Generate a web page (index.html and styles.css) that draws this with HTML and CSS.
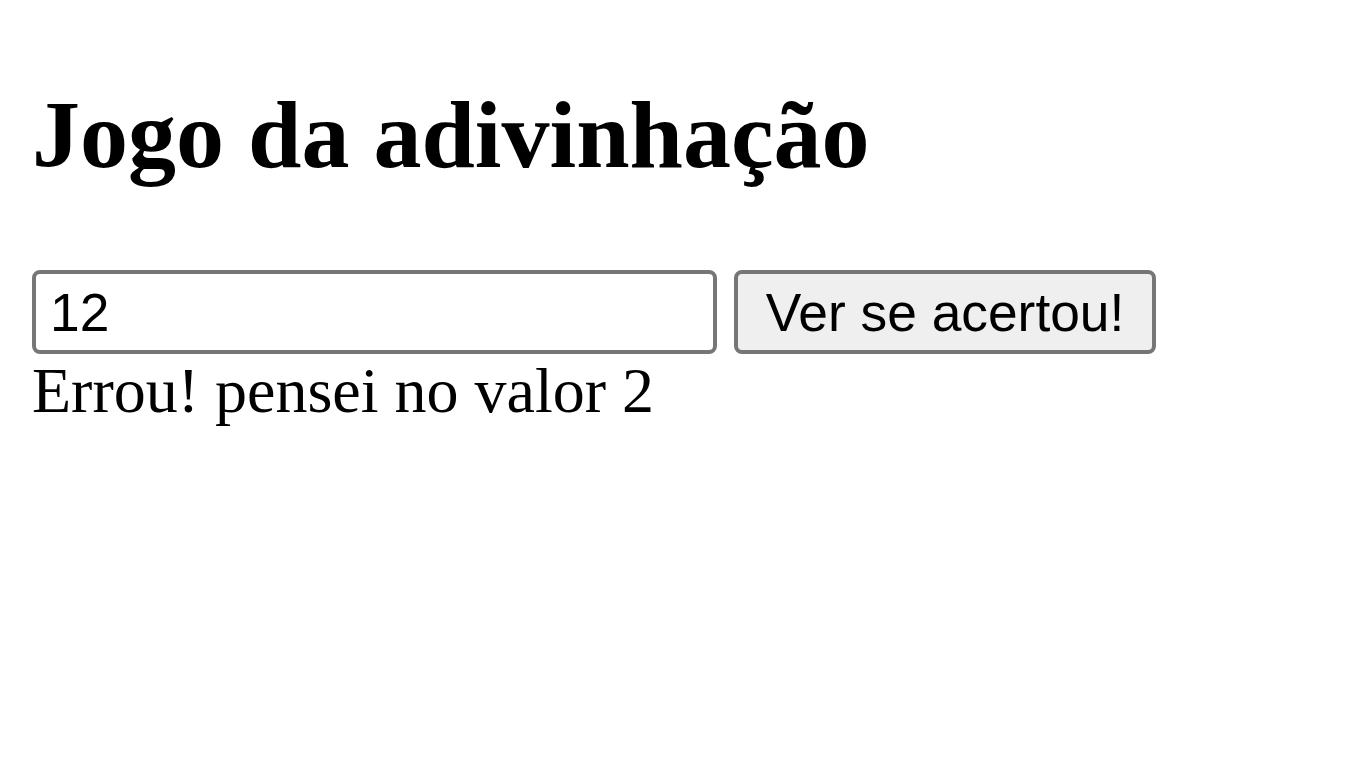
FILE: index.html
```html
<!DOCTYPE html>
<html lang="pt-BR">
<head>
<meta charset="utf-8">
<title>Jogo da adivinhação</title>
<link rel="stylesheet" href="styles.css">
</head>
<body>
<section class="game">
  <h1 class="title">Jogo da adivinhação</h1>
  <div class="row">
    <input class="guess" type="text" value="12">
    <button class="check" type="button">Ver se acertou!</button>
  </div>
  <div class="message">Errou! pensei no valor 2</div>
</section>
</body>
</html>
```
FILE: styles.css
```css
html, body {
  background: #fff;
}
body {
  margin: 0 32px 32px;
  font-family: "Liberation Serif", "Times New Roman", serif;
  font-size: 64px;
  color: #000;
}
.game {
  padding-top: 80px;
}
.title {
  font-size: 96px;
  font-weight: bold;
  margin: 0 0 80px;
  line-height: 110px;
}
.row {
  display: flex;
  gap: 17px;
  align-items: flex-start;
}
.guess {
  box-sizing: border-box;
  width: 685px;
  height: 84px;
  margin: 0;
  padding: 0 12px 0 14px;
  border: 4px solid #767676;
  border-radius: 8px;
  background: #fff;
  font-family: "Liberation Sans", Arial, sans-serif;
  font-size: 53.33px;
  color: #000;
  outline: none;
}
.check {
  box-sizing: border-box;
  width: 422px;
  height: 84px;
  margin: 0;
  padding: 0 24px;
  border: 4px solid #767676;
  border-radius: 8px;
  background: #efefef;
  font-family: "Liberation Sans", Arial, sans-serif;
  font-size: 53.33px;
  color: #000;
}
.message {
  line-height: 73px;
}
```
